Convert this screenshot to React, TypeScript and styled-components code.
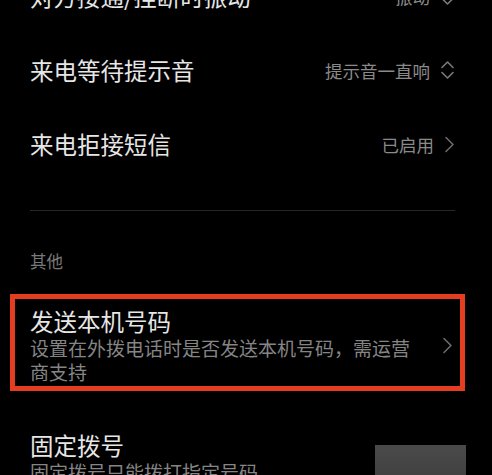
import styled, { createGlobalStyle } from 'styled-components';

const GlobalStyle = createGlobalStyle`
	html, body {
		margin: 0;
		padding: 0;
		background: #000;
		overflow: hidden;
	}
	body {
		font-family: 'Noto Sans CJK SC', 'Noto Sans', sans-serif;
	}
`;

const Page = styled.div`
	width: 492px;
	height: 475px;
	overflow: hidden;
	background: #000;
`;

const List = styled.div`
	display: flex;
	flex-direction: column;
	margin-top: -41px;
`;

const Row = styled.div`
	display: flex;
	align-items: center;
	height: 74px;
	padding: 0 37px 0 30px;
`;

const Title = styled.div`
	flex: 1;
	font-size: 23.5px;
	line-height: 30px;
	color: #e6e6e6;
	white-space: nowrap;
`;

const Value = styled.div`
	display: flex;
	align-items: center;
	gap: 10px;
	font-size: 17.5px;
	color: #8a8a8a;
`;

const Divider = styled.div`
	height: 1px;
	margin: 29px 37px 0 30px;
	background: #262626;
`;

const SectionHeader = styled.div`
	padding: 40px 30px 0;
	font-size: 16.5px;
	line-height: 20px;
	color: #7a7a7a;
`;

const HighlightRow = styled.div`
	display: flex;
	align-items: center;
	margin: 23px 27px 0 10px;
	padding: 7px 7px 2px 15px;
	border: 5px solid #e53d1f;
`;

const TextBlock = styled.div<{ $width: number }>`
	display: flex;
	flex-direction: column;
	width: ${({ $width }) => $width}px;
	margin-right: auto;
`;

const Subtitle = styled.div`
	font-size: 19px;
	line-height: 24px;
	color: #858585;
`;

const PlainRow = styled.div`
	display: flex;
	align-items: flex-start;
	padding: 39px 26px 0 30px;
`;

const Obscured = styled.div`
	width: 91px;
	height: 60px;
	margin-top: 15px;
	background: linear-gradient(180deg, #4a4a4a 0%, #404040 60%, #3c3c3c 100%);
	filter: blur(0.6px);
`;

const UpDown = () => (
	<svg width="15" height="20" viewBox="0 0 15 20" fill="none" stroke="#7a7a7a" strokeWidth="1.6" strokeLinecap="round" strokeLinejoin="round">
		<polyline points="2,7.5 7.5,2 13,7.5" />
		<polyline points="2,12.5 7.5,18 13,12.5" />
	</svg>
);

const ChevronRight = () => (
	<svg width="11" height="17" viewBox="0 0 11 17" fill="none" stroke="#6e6e6e" strokeWidth="1.5" strokeLinecap="round" strokeLinejoin="round">
		<polyline points="2,1.5 9,8.5 2,15.5" />
	</svg>
);

const App = () => (
	<>
		<GlobalStyle />
		<Page>
			<List>
				<Row>
					<Title>对方接通/挂断时振动</Title>
					<Value>
						振动
						<UpDown />
					</Value>
				</Row>
				<Row>
					<Title>来电等待提示音</Title>
					<Value>
						提示音一直响
						<UpDown />
					</Value>
				</Row>
				<Row>
					<Title>来电拒接短信</Title>
					<Value>
						已启用
						<ChevronRight />
					</Value>
				</Row>
				<Divider />
				<SectionHeader>其他</SectionHeader>
				<HighlightRow>
					<TextBlock $width={392}>
						<Title>发送本机号码</Title>
						<Subtitle>设置在外拨电话时是否发送本机号码，需运营商支持</Subtitle>
					</TextBlock>
					<ChevronRight />
				</HighlightRow>
				<PlainRow>
					<TextBlock $width={320}>
						<Title>固定拨号</Title>
						<Subtitle>固定拨号只能拨打指定号码</Subtitle>
					</TextBlock>
					<Obscured />
				</PlainRow>
			</List>
		</Page>
	</>
);

export default App;
